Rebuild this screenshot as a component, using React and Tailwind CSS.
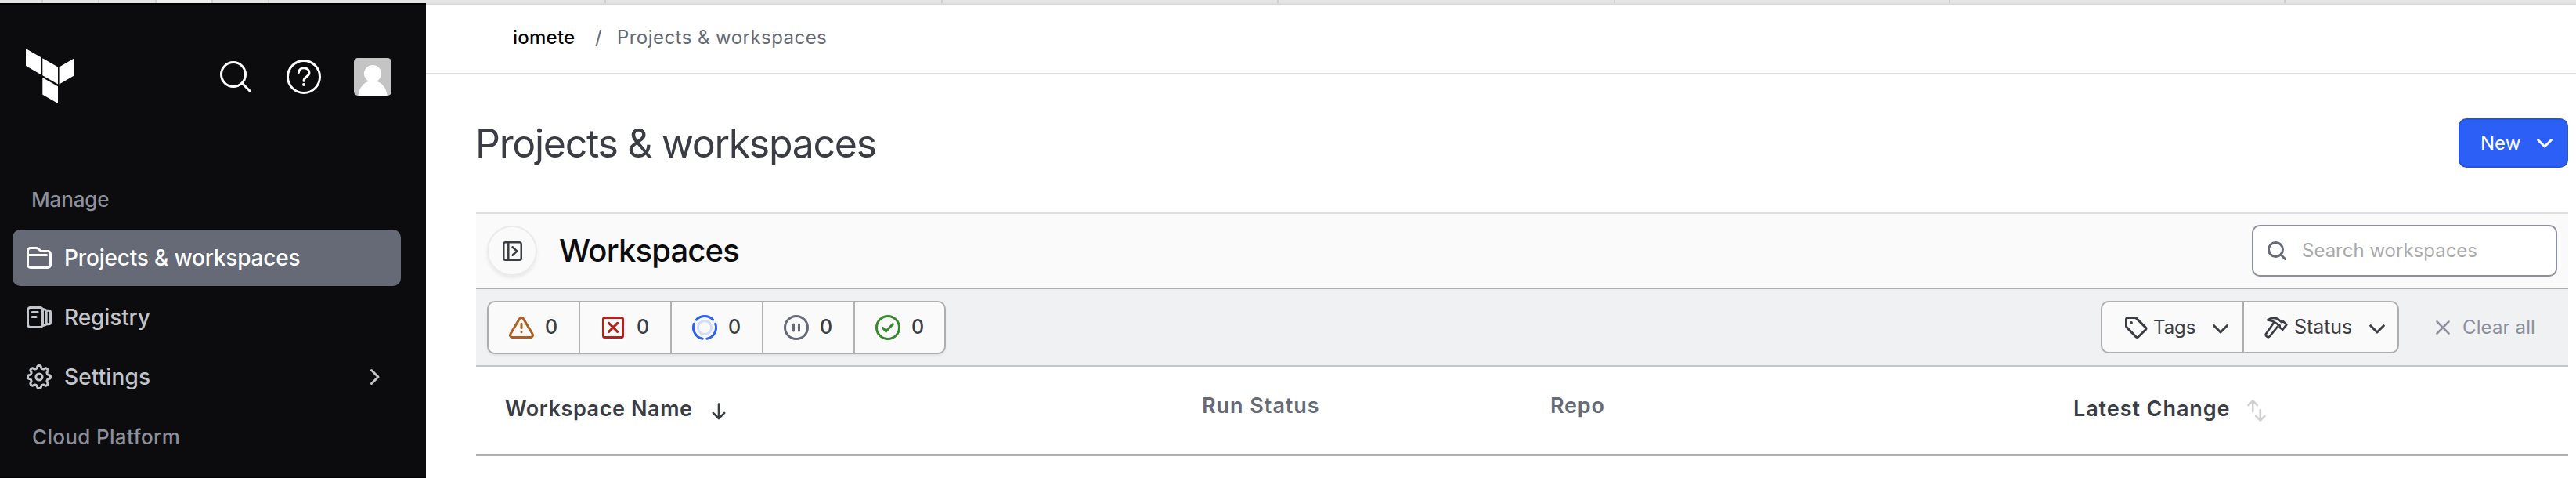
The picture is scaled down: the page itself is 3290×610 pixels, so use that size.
import React from "react";

function Icon({ children, className = "size-8", stroke = 1.5 }) {
  return (
    <svg
      viewBox="0 0 16 16"
      className={`shrink-0 overflow-visible ${className}`}
      fill="none"
      stroke="currentColor"
      strokeWidth={stroke}
      strokeLinecap="round"
      strokeLinejoin="round"
    >
      {children}
    </svg>
  );
}

/* Eight-toothed gear outline */
const gear =
  Array.from({ length: 144 }, (_, i) => {
    const t = (i / 144) * Math.PI * 2;
    const r = 6.4 + 0.85 * (Math.tanh(1.8 * Math.cos(8 * t)) / Math.tanh(1.8));
    return `${i ? "L" : "M"}${(8 + r * Math.cos(t)).toFixed(3)} ${(8 + r * Math.sin(t)).toFixed(3)}`;
  }).join("") + "Z";

function arc(from, to, r) {
  const p = (a) => {
    const t = ((a - 90) * Math.PI) / 180;
    return `${(8 + r * Math.cos(t)).toFixed(3)} ${(8 + r * Math.sin(t)).toFixed(3)}`;
  };
  return `M${p(from)}A${r} ${r} 0 0 1 ${p(to)}`;
}

const FolderIcon = () => (
  <Icon>
    <path d="M.75 12.5v-9A1.75 1.75 0 0 1 2.5 1.75h3.7c.45 0 .85.15 1.2.45l1.3 1.1c.35.3.75.45 1.2.45h3.6a1.75 1.75 0 0 1 1.75 1.75v7a1.75 1.75 0 0 1-1.75 1.75h-11A1.75 1.75 0 0 1 .75 12.5zM.75 6.2h12" />
  </Icon>
);
const RegistryIcon = () => (
  <Icon>
    <rect x=".75" y="1.75" width="9.5" height="12.5" rx="1.6" />
    <path d="M3.6 4.75h3.5M3.6 7.75h2.5M10.3 2.7l1.5.4a1 1 0 0 1 .8 1v7.8a1 1 0 0 1-.8 1l-1.5.4M12.6 3.6h1.4a1.25 1.25 0 0 1 1.25 1.25v6.3A1.25 1.25 0 0 1 14 12.4h-1.4" />
  </Icon>
);
const GearIcon = () => (
  <Icon>
    <path d={gear} />
    <circle cx="8" cy="8" r="2.05" />
  </Icon>
);

const ticks = [
  "w-[55px]", "w-[72px]", "w-[73px]", "w-[72px] bg-[#eeeeee]", "w-[72px]", "w-[430px]",
  "w-[430px]", "w-[429px]", "w-[430px]", "w-[428px]", "w-[428px]",
];

function NavItem({ icon, label, className = "", text = "", children }) {
  return (
    <div className={`flex h-[72px] items-center rounded-[10px] pl-[18px] pr-[26px] ${className}`}>
      {icon}
      <span className={`ml-[16px] flex-1 whitespace-nowrap text-[28px] font-medium ${text}`}>{label}</span>
      {children}
    </div>
  );
}

const statuses = [
  {
    color: "text-[#b05d1e]",
    icon: (
      <>
        <path d="M6.7 2.5a1.5 1.5 0 0 1 2.6 0l5.75 9.6a1.4 1.4 0 0 1-1.2 2.15H2.15a1.4 1.4 0 0 1-1.2-2.15z" />
        <path d="M8 5.6v2.6M8 10.9v.02" />
      </>
    ),
  },
  {
    color: "text-[#b3231a]",
    icon: (
      <>
        <rect x="1.75" y="1.75" width="12.5" height="12.5" rx="1" />
        <path d="M5.3 5.2l5.5 5.5M10.8 5.2l-5.5 5.5" />
      </>
    ),
  },
  {
    color: "text-[#2b62f6]",
    icon: (
      <>
        <circle cx="8" cy="8" r="4.3" stroke="#d3dcf9" />
        <path d={arc(-47, 47, 7.25) + arc(71, 169, 7.25) + arc(191, 289, 7.25)} />
      </>
    ),
  },
  {
    color: "text-[#656a76]",
    icon: (
      <>
        <circle cx="8" cy="8" r="7.25" />
        <path d="M6.25 6v4M9.75 6v4" />
      </>
    ),
  },
  {
    color: "text-[#37892f]",
    icon: (
      <>
        <circle cx="8" cy="8" r="7.25" />
        <path d="M4.8 8.3l2 2.1 4.4-4.6" />
      </>
    ),
  },
];

const ChevronDown = ({ className = "" }) => (
  <svg viewBox="0 0 20 12" className={`h-[12px] w-[20px] shrink-0 ${className}`} fill="none" stroke="currentColor" strokeWidth="3" strokeLinecap="round" strokeLinejoin="round">
    <path d="M1.7 1.7L10 10l8.3-8.3" />
  </svg>
);

function Sidebar() {
  return (
    <aside className="flex w-[544px] shrink-0 flex-col border-t-2 border-b border-black bg-[#0c0c0e] pl-4 pr-8">
      <div className="flex h-[186px] items-start pl-[17px] pt-[56px]">
        <svg viewBox="0 0 62 70" className="h-[70px] w-[62px] shrink-0 text-white" fill="currentColor">
          <path d="M0 0l19.5 11.3v22L0 22zM21.3 12.3L41 23.6v22L21.3 34.3zM42.6 23.6L62 12.3v22L42.6 45.6zM21.3 36.9L41 48.2V70L21.3 58.7z" />
        </svg>
        <svg viewBox="0 0 42 42" className="ml-[185px] mt-[15px] size-[42px] shrink-0 text-white" fill="none" stroke="currentColor" strokeWidth="3" strokeLinecap="round">
          <circle cx="18" cy="18" r="15.5" />
          <path d="M29.5 29.5l9.5 9.5" />
        </svg>
        <svg viewBox="0 0 44 44" className="ml-[44px] mt-[14px] size-[44px] shrink-0 text-white" fill="none" stroke="currentColor" strokeWidth="3" strokeLinecap="round">
          <circle cx="22" cy="22" r="20.5" />
          <path d="M15.5 16.5c.5-8 14-7.5 13.5.7-.3 5-7 4.8-7 10" strokeLinejoin="round" />
          <circle cx="22" cy="32" r="2" fill="currentColor" stroke="none" />
        </svg>
        <svg viewBox="0 0 48 48" className="ml-[42px] mt-[12px] size-[48px] shrink-0 rounded-[5px] bg-[#c4c4c4] text-white" fill="currentColor">
          <circle cx="24" cy="20" r="11" />
          <path d="M5.5 48C6.500 37 14 29 24 29s17.500 8 18.500 19z" />
        </svg>
      </div>
      <div className="flex h-[101px] items-end pb-[4px]">
        <span className="flex h-[70px] items-center pl-[24px] text-[26px] font-medium tracking-[-0.16px] text-[#8c909c]">Manage</span>
      </div>
      <nav className="flex flex-col gap-1">
        <NavItem icon={<FolderIcon />} label="Projects & workspaces" className="bg-[#656a76] text-white" text="tracking-[-0.18px]" />
        <NavItem icon={<RegistryIcon />} label="Registry" className="text-[#c2c5cb]" text="tracking-[-0.1px]" />
        <NavItem icon={<GearIcon />} label="Settings" className="text-[#c2c5cb]" text="tracking-[0.13px]">
          <svg viewBox="0 0 14 22" className="h-[22px] w-[14px]" fill="none" stroke="currentColor" strokeWidth="3" strokeLinecap="round" strokeLinejoin="round">
            <path d="M2.500 2.500L11 11l-8.500 8.500" />
          </svg>
        </NavItem>
        <div className="flex h-[72px] items-center whitespace-nowrap pl-[25px] text-[26px] font-medium tracking-[0.33px] text-[#8c909c]">Cloud Platform</div>
      </nav>
    </aside>
  );
}

export default function App() {
  return (
    <div className="flex h-[610px] w-[3290px] flex-col overflow-hidden bg-white font-['Inter','Liberation_Sans',sans-serif] text-[#3b3d45]">
      <div className="flex h-1 shrink-0 bg-[#e4e4e4]">
        {ticks.map((w, i) => (
          <div key={i} className={`shrink-0 border-r-2 border-[#cfcfcf] ${w}`} />
        ))}
      </div>
      <div className="flex min-h-0 flex-1">
        <Sidebar />
        <main className="flex min-w-0 flex-1 flex-col border-t-2 border-[#dcdcdc]">
          <div className="flex h-[89px] shrink-0 items-center whitespace-nowrap border-b-2 border-[#dedfe3] pb-[4px] pl-[111px] text-[24px]">
            <span className="w-[105px] font-medium tracking-[0.24px] text-black">iomete</span>
            <span className="w-[28px] text-[#656a76]">/</span>
            <span className="tracking-[0.45px] text-[#656a76]">Projects &amp; workspaces</span>
          </div>
          <div className="flex h-[176px] shrink-0 items-center justify-between pl-[64px] pr-[10px]">
            <h1 className="-ml-px whitespace-nowrap text-[50px] font-normal tracking-[-1.3px]">Projects &amp; workspaces</h1>
            <button className="mb-px flex h-[63px] w-[140px] items-center rounded-[10px] border-2 border-[#2453dc] bg-[#2b5ff6] pl-[26px] text-[24px] text-white">
              <span className="w-[72px] text-left">New</span>
              <ChevronDown />
            </button>
          </div>
          <section className="ml-[64px] mr-[10px]">
            <div className="flex h-[96px] items-center border-t-2 border-[#dedede] bg-[#fafafa] pl-[14px] pr-[14px]">
              <div className="flex size-[64px] items-center justify-center rounded-full border-2 border-[#ebebeb] shadow-[0_3px_4px_rgba(0,0,0,0.07)]">
                <svg viewBox="0 0 24 24" className="size-[25px]" fill="none" stroke="currentColor" strokeWidth="2.400" strokeLinecap="round" strokeLinejoin="round">
                  <rect x="1.200" y="1.200" width="21.600" height="21.600" rx="2.500" />
                  <path d="M7 1.500v21M12 7l5.500 5-5.500 5" />
                </svg>
              </div>
              <h2 className="ml-[28px] flex-1 text-[40px] font-medium tracking-[-0.82px] text-[#0c0c0e]">Workspaces</h2>
              <div className="flex h-[66px] w-[390px] items-center whitespace-nowrap rounded-[10px] border-2 border-[#8c909c] bg-white pl-[18px]">
                <svg viewBox="0 0 24 24" className="size-[24px] text-[#656a76]" fill="none" stroke="currentColor" strokeWidth="3" strokeLinecap="round">
                  <circle cx="10.500" cy="10.500" r="9" />
                  <path d="M17 17l5.500 5.500" />
                </svg>
                <span className="ml-[20px] text-[24px] text-[#aaaaaa]">Search workspaces</span>
              </div>
            </div>
            <div className="flex h-[101px] items-center border-y-2 border-t-[#aeaeae] border-b-[#c2c5cb] bg-[#f0f1f3] pl-[14px]">
              <div className="flex h-[68px] w-[586px] rounded-[10px] border-2 border-[#aeaeae] bg-[#fafafa] shadow-[0_2px_2px_rgba(0,0,0,0.06)]">
                {statuses.map((s, i) => (
                  <div key={i} className="flex w-[117px] shrink-0 items-center border-l-2 border-[#b2b2b4] pl-[26px] text-[25px] font-medium first:w-[115px] first:border-l-0">
                    <Icon className={`size-8 ${s.color}`}>{s.icon}</Icon>
                    <span className="ml-[14px]">0</span>
                  </div>
                ))}
              </div>
              <div className="ml-auto flex h-[67px] w-[381px] rounded-[10px] border-2 border-[#aeaeae] bg-[#fafafa] text-[25px]">
                <div className="flex w-[181px] items-center border-r-2 border-[#aeaeae] pl-[27px]">
                  <Icon className="size-8">
                    <path d="M2.750 1.750h4.700c.3 0 .55.1.75.3l5.950 5.900a1 1 0 0 1 0 1.400L9.400 14a.9.9 0 0 1-1.300 0L2.050 7.800a1 1 0 0 1-.3-.7V2.750a1 1 0 0 1 1-1z" />
                    <circle cx="5" cy="5" r=".95" fill="currentColor" stroke="none" />
                  </Icon>
                  <span className="ml-[6px] w-[76px] text-[24px] tracking-[-0.1px]">Tags</span>
                  <ChevronDown className="mt-1" />
                </div>
                <div className="flex flex-1 items-center pl-[25px]">
                  <svg viewBox="572 36 96 96" className="size-[32px] shrink-0" fill="none" stroke="currentColor" strokeWidth="8" strokeLinejoin="round" strokeLinecap="round">
                    <path d="M588 55C598 47 614 46 627 51L641 64 648 61 660 73 645 92 634 84 634 76 612 63C605 57 597 56 588 55Z" />
                    <path d="M609 68L582 107C576 115 589 126 596 117L626 80" />
                  </svg>
                  <span className="ml-[7px] w-[96px] text-[25px] tracking-[-0.07px]">Status</span>
                  <ChevronDown className="mt-1" />
                </div>
              </div>
              <div className="ml-[47px] flex w-[169px] items-center whitespace-nowrap text-[24px] text-[#8c909c]">
                <svg viewBox="0 0 18 18" className="mt-[1px] size-[18px] shrink-0" fill="none" stroke="currentColor" strokeWidth="2.500" strokeLinecap="round">
                  <path d="M1.500 1.500l15 15M16.500 1.500l-15 15" />
                </svg>
                <span className="ml-[16px] tracking-[0.12px]">Clear all</span>
              </div>
            </div>
            <div className="flex h-[114px] items-center whitespace-nowrap border-b-2 border-[#b0b0b0] pb-[3px] text-[27px] font-semibold">
              <div className="flex w-[927px] items-center pl-[37px]">
                <span className="tracking-[0.59px]">Workspace Name</span>
                <svg viewBox="0 0 18 22" className="ml-[24px] mt-[4px] h-[22px] w-[18px]" fill="none" stroke="currentColor" strokeWidth="2.600" strokeLinecap="round" strokeLinejoin="round">
                  <path d="M9 1.500v18M1.800 12.800L9 20l7.200-7.200" />
                </svg>
              </div>
              <span className="w-[445px] pb-[8px] tracking-[0.95px] text-[#656a76]">Run Status</span>
              <span className="w-[668px] pb-[8px] tracking-[0.77px] text-[#656a76]">Repo</span>
              <span className="tracking-[0.92px]">Latest Change</span>
              <svg viewBox="0 0 24 28" className="ml-[22px] mt-[3px] h-[28px] w-[24px] text-[#d0d0d0]" fill="none" stroke="currentColor" strokeWidth="2.600" strokeLinecap="round" strokeLinejoin="round">
                <path d="M7.200 15V1.600M1.500 7.200l5.700-5.700 5.700 5.700M16.800 13v13.400M11.100 20.800l5.700 5.700 5.700-5.700" />
              </svg>
            </div>
          </section>
        </main>
      </div>
    </div>
  );
}
